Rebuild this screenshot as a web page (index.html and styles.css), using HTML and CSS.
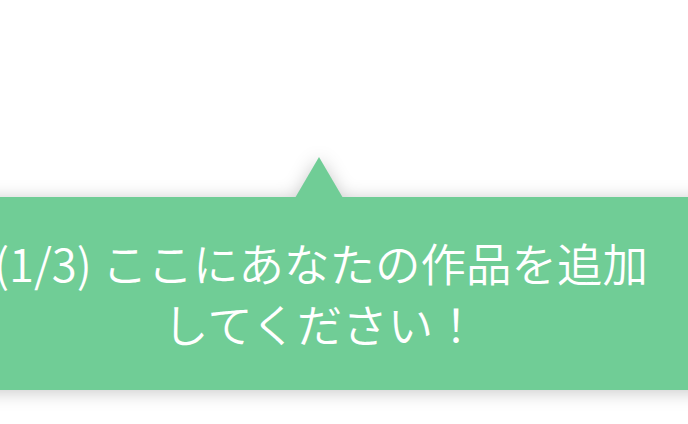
FILE: index.html
```html
<!DOCTYPE html>
<html lang="ja">
<head>
<meta charset="utf-8">
<link rel="stylesheet" href="styles.css">
</head>
<body>
<div class="stage">
  <div class="tip-wrap">
    <div class="tip">
      <p class="tip-text">(1/3) ここにあなたの作品を追加<br>してください！</p>
    </div>
  </div>
</div>
</body>
</html>
```
FILE: styles.css
```css
html, body {
  margin: 0;
  padding: 0;
  background: #ffffff;
  width: 688px;
  height: 424px;
  overflow: hidden;
}
.stage {
  padding-top: 197px;
}
.tip-wrap {
  width: 780px;
  margin-left: -69px;
  filter: drop-shadow(0 2px 9px rgba(0, 0, 0, 0.22));
}
.tip {
  position: relative;
  background: #70cd96;
  height: 193px;
  display: flex;
  align-items: center;
  justify-content: center;
}
.tip::before {
  content: "";
  position: absolute;
  top: -40px;
  left: 364px;
  width: 48px;
  height: 41px;
  background: #70cd96;
  clip-path: polygon(50% 0, 100% 100%, 0 100%);
}
.tip-text {
  margin: 0;
  color: #ffffff;
  font-family: "Noto Sans CJK JP", "Noto Sans", sans-serif;
  font-weight: 350;
  font-size: 45.5px;
  line-height: 61px;
  text-align: center;
  white-space: nowrap;
  padding-bottom: 2px;
}
```
